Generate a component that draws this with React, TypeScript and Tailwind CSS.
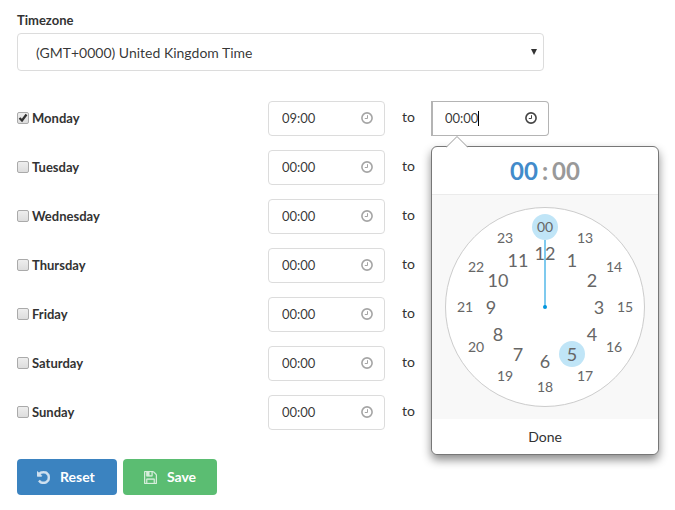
import React, { useState } from 'react';

interface DayHours {
  day: string;
  open: boolean;
  from: string;
  to: string;
}

interface IconProps {
  className?: string;
}

const initialHours: DayHours[] = [
  { day: 'Monday', open: true, from: '09:00', to: '00:00' },
  { day: 'Tuesday', open: false, from: '00:00', to: '00:00' },
  { day: 'Wednesday', open: false, from: '00:00', to: '00:00' },
  { day: 'Thursday', open: false, from: '00:00', to: '00:00' },
  { day: 'Friday', open: false, from: '00:00', to: '00:00' },
  { day: 'Saturday', open: false, from: '00:00', to: '00:00' },
  { day: 'Sunday', open: false, from: '00:00', to: '00:00' },
];

const ClockIcon: React.FC<IconProps> = ({ className }) => (
  <svg viewBox="0 0 12 12" fill="none" stroke="currentColor" aria-hidden="true" className={className}>
    <circle cx="6" cy="6" r="5.1" strokeWidth="1.6" />
    <path d="M6.5 3.2V6.5H3.8" strokeWidth="1" />
  </svg>
);

const UndoIcon: React.FC<IconProps> = ({ className }) => (
  <svg viewBox="0 128 1536 1536" fill="currentColor" aria-hidden="true" className={className}>
    <path
      stroke="currentColor"
      strokeWidth="60"
      d="M1536 896q0 156-61 298t-164 245-245 164-298 61q-172 0-327-72.5t-264-204.5q-7-10-6.5-22.5t8.5-20.5l137-138q10-9 25-9 16 2 23 12 73 95 179 147t225 52q104 0 198.5-40.5t163.5-109.5 109.5-163.5 40.5-198.5-40.5-198.5-109.5-163.5-163.5-109.5-198.5-40.5q-98 0-188 35.5t-160 101.5l137 138q31 30 14 69-17 40-59 40h-448q-26 0-45-19t-19-45v-448q0-42 40-59 39-17 69 14l130 129q107-101 244.5-156.5t284.5-55.5q156 0 298 61t245 164 164 245 61 298z"
    />
  </svg>
);

const SaveIcon: React.FC<IconProps> = ({ className }) => (
  <svg viewBox="0 128 1536 1536" fill="currentColor" aria-hidden="true" className={className}>
    <path
      stroke="currentColor"
      strokeWidth="30"
      d="M384 1536h768v-384h-768v384zm896 0h128v-896q0-14-10-38.5t-20-34.5l-281-281q-10-10-34-20t-39-10v416q0 40-28 68t-68 28h-576q-40 0-68-28t-28-68v-416h-128v1280h128v-416q0-40 28-68t68-28h832q40 0 68 28t28 68v416zm-384-928v-320q0-13-9.5-22.5t-22.5-9.5h-192q-13 0-22.5 9.5t-9.5 22.5v320q0 13 9.5 22.5t22.5 9.5h192q13 0 22.5-9.5t9.5-22.5zm640 32v928q0 40-28 68t-68 28h-1344q-40 0-68-28t-28-68v-1344q0-40 28-68t68-28h928q40 0 88 20t76 48l280 280q28 28 48 76t20 88z"
    />
  </svg>
);

interface TimeInputProps {
  label: string;
  value: string;
  active?: boolean;
  onChange: (value: string) => void;
}

const TimeInput: React.FC<TimeInputProps> = ({ label, value, active, onChange }) => (
  <div className={`relative ${active ? '-ml-px' : ''}`}>
    <input
      type="text"
      aria-label={label}
      value={value}
      onChange={e => onChange(e.target.value)}
      className={`block h-[35px] w-full border bg-white pb-[2px] pr-8 text-[13px] text-black/80 outline-none ${
        active ? 'rounded-r border-l-2 border-[#b4b4b4] pl-3' : 'rounded border-[#dcdcdc] pl-[13px]'
      }`}
    />
    {active && <span className="absolute left-[47px] top-[10px] h-[15px] w-px bg-black" />}
    <ClockIcon
      className={`pointer-events-none absolute right-3 top-[11px] size-3 ${active ? 'text-[#444]' : 'text-[#a5a5a5]'}`}
    />
  </div>
);

const CENTER = 100;
const OUTER_RADIUS = 80;
const INNER_RADIUS = 54;

const hourPosition = (hour: number) => {
  const radius = hour === 0 || hour > 12 ? OUTER_RADIUS : INNER_RADIUS;
  const angle = (hour / 6) * Math.PI;
  return {
    left: Math.round(CENTER + Math.sin(angle) * radius),
    top: Math.round(CENTER - Math.cos(angle) * radius),
  };
};

interface ClockPickerProps {
  onPick: (hour: string) => void;
}

const ClockPicker: React.FC<ClockPickerProps> = ({ onPick }) => {
  const [hovered, setHovered] = useState(5);
  const hours = Array.from({ length: 24 }, (_, hour) => hour);

  return (
    <div className="absolute -left-px top-full z-10 mt-[10px] w-[228px] rounded-md border border-[#777] bg-white shadow-[0_5px_10px_rgba(0,0,0,0.45)]">
      <svg viewBox="0 0 22 12" className="absolute -top-[11px] left-[14px] h-3 w-[22px]" aria-hidden="true">
        <path d="M0 11.5 L11 0.5 L22 11.5 V12 H0 Z" fill="#fff" />
        <path d="M0 11.5 L11 0.5 L22 11.5" fill="none" stroke="#999" />
      </svg>
      <div className="flex h-12 items-center justify-center gap-1 border-b border-[#ebebeb] text-2xl font-bold text-[#999]">
        <span className="text-[#428bca]">00</span>
        <span>:</span>
        <span>00</span>
      </div>
      <div className="flex justify-center bg-[#f8f8f8] py-3">
        <div className="relative size-[200px] rounded-full border border-[#ccc] bg-white">
          {hours.map(hour => (
            <button
              key={hour}
              type="button"
              onMouseEnter={() => setHovered(hour)}
              onClick={() => onPick(String(hour).padStart(2, '0'))}
              style={hourPosition(hour)}
              className={`absolute -ml-[14px] -mt-[14px] size-[26px] rounded-full text-center leading-[26px] text-[#666] ${
                hour === 0 || hour > 12 ? 'text-sm' : 'text-lg'
              } ${hour === 0 || hour === hovered ? 'bg-[#c0e5f7]' : ''}`}
            >
              {hour === 0 ? '00' : hour}
            </button>
          ))}
          <svg viewBox="0 0 200 200" className="pointer-events-none absolute -inset-px size-[200px]" aria-hidden="true">
            <line x1="100" y1="100" x2="100" y2="33" stroke="#0095dd" strokeOpacity="0.5" strokeWidth="2" />
            <circle cx="100" cy="100" r="2" fill="#0095dd" />
          </svg>
        </div>
      </div>
      <button type="button" className="block h-[35px] w-full rounded-b-md bg-white text-center text-sm text-[#333]">
        Done
      </button>
    </div>
  );
};

const App: React.FC = () => {
  const [hours, setHours] = useState<DayHours[]>(initialHours);

  const update = (day: string, change: Partial<DayHours>) => {
    setHours(prev => prev.map(item => (item.day === day ? { ...item, ...change } : item)));
  };

  return (
    <form
      onSubmit={e => e.preventDefault()}
      className="bg-white px-[17px] pb-4 pt-3 font-[Lato,'Liberation_Sans',sans-serif] text-sm text-[#333]"
    >
      <label htmlFor="timezone" className="mb-[5px] block text-[13px] font-bold leading-4">
        Timezone
      </label>
      <div className="relative max-w-[527px]">
        <select
          id="timezone"
          className="block h-[38px] w-full appearance-none rounded border border-[#dcdcdc] bg-white pl-[18px] pr-8 pt-[2px] text-sm text-black/80 outline-none"
        >
          <option>(GMT+0000) United Kingdom Time</option>
        </select>
        <svg viewBox="0 0 6 6" className="pointer-events-none absolute right-[7px] top-4 size-[6px]" aria-hidden="true">
          <path d="M0 0h6L3 6z" fill="#333" />
        </svg>
      </div>

      <div className="mt-[30px] space-y-[14px]">
        {hours.map(item => {
          const picking = item.day === 'Monday';
          return (
            <div key={item.day} className="grid grid-cols-[minmax(0,251px)_117px_47px_117px] items-center">
              <label className="flex items-center gap-[3px] text-[13px] font-bold">
                <span className="relative mb-px size-3">
                  <input
                    type="checkbox"
                    checked={item.open}
                    onChange={e => update(item.day, { open: e.target.checked })}
                    className="block size-3 appearance-none rounded-xs border border-[#aaa] bg-linear-to-b from-[#eee] to-[#ddd]"
                  />
                  {item.open && (
                    <svg viewBox="0 0 12 12" className="pointer-events-none absolute inset-0 size-3" aria-hidden="true">
                      <path d="M2.5 6 L5 8.5 L9.5 2.5" fill="none" stroke="#333" strokeWidth="2.2" />
                    </svg>
                  )}
                </span>
                {item.day}
              </label>
              <TimeInput
                label={`${item.day} from`}
                value={item.from}
                onChange={value => update(item.day, { from: value })}
              />
              <span className="pb-[3px] text-center">to</span>
              <div className="relative">
                <TimeInput
                  label={`${item.day} to`}
                  value={item.to}
                  active={picking}
                  onChange={value => update(item.day, { to: value })}
                />
                {picking && <ClockPicker onPick={hour => update(item.day, { to: `${hour}:00` })} />}
              </div>
            </div>
          );
        })}
      </div>

      <div className="mt-[29px] flex gap-[6px] text-sm font-bold text-white">
        <button type="reset" className="flex h-9 w-[100px] items-center rounded bg-[#3b83c0] pl-5">
          <UndoIcon className="mr-[10px] size-[13px] opacity-75" />
          Reset
        </button>
        <button type="submit" className="flex h-9 w-[94px] items-center justify-center rounded bg-[#5bbd72]">
          <SaveIcon className="mr-[10px] size-[13px] opacity-75" />
          Save
        </button>
      </div>
    </form>
  );
};

export default App;
